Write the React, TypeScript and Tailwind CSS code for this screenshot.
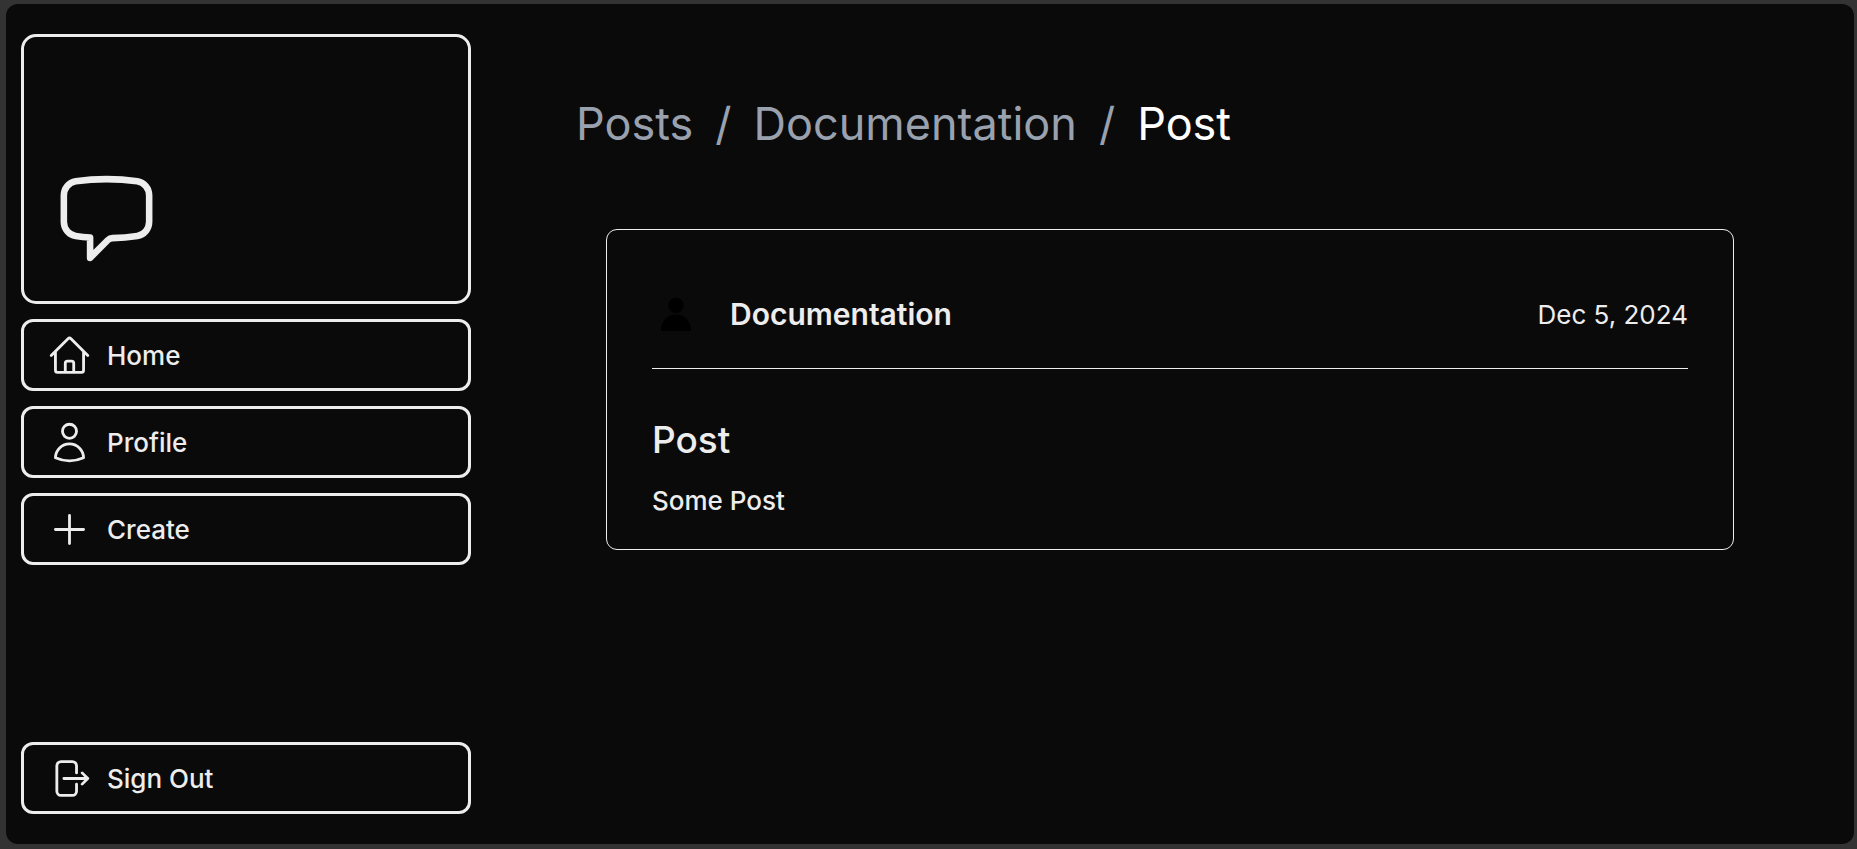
import type { ReactNode } from "react";

const paths = {
  home: "m2.25 12 8.954-8.955c.44-.439 1.152-.439 1.591 0L21.75 12M4.5 9.75v10.125c0 .621.504 1.125 1.125 1.125H9.75v-4.875c0-.621.504-1.125 1.125-1.125h2.25c.621 0 1.125.504 1.125 1.125V21h4.125c.621 0 1.125-.504 1.125-1.125V9.75M8.25 21h8.25",
  user: "M15.75 6a3.75 3.75 0 1 1-7.5 0 3.75 3.75 0 0 1 7.5 0ZM4.501 20.118a7.5 7.5 0 0 1 14.998 0A17.933 17.933 0 0 1 12 21.75c-2.676 0-5.216-.584-7.499-1.632Z",
  plus: "M12 4.5v15m7.5-7.5h-15",
  signOut:
    "M15.75 9V5.25A2.25 2.25 0 0 0 13.5 3h-6a2.25 2.25 0 0 0-2.25 2.25v13.5A2.25 2.25 0 0 0 7.5 21h6a2.25 2.25 0 0 0 2.25-2.25V15m3 0 3-3m0 0-3-3m3 3H9",
  chat: "M2.25 12.76c0 1.6 1.123 2.994 2.707 3.227 1.087.16 2.185.283 3.293.369V21l4.076-4.076a1.526 1.526 0 0 1 1.037-.443 48.282 48.282 0 0 0 5.68-.494c1.584-.233 2.707-1.626 2.707-3.228V6.741c0-1.602-1.123-2.995-2.707-3.228A48.394 48.394 0 0 0 12 3c-2.392 0-4.744.175-7.043.513C3.373 3.746 2.25 5.14 2.25 6.741v6.018Z",
};

function Icon({ name, className }: { name: keyof typeof paths; className: string }) {
  return (
    <svg
      viewBox="0 0 24 24"
      fill="none"
      stroke="currentColor"
      strokeWidth={1.5}
      strokeLinecap="round"
      strokeLinejoin="round"
      aria-hidden="true"
      className={className}
    >
      <path d={paths[name]} />
    </svg>
  );
}

const itemClass =
  "flex h-[72px] w-full items-center gap-[15px] rounded-xl border-3 border-[#ededed] px-[23px] text-[26px] font-medium";

function NavLink({ icon, children }: { icon: keyof typeof paths; children: ReactNode }) {
  return (
    <a href="#" className={itemClass}>
      <Icon name={icon} className="size-[45px] shrink-0" />
      {children}
    </a>
  );
}

function Sidebar() {
  return (
    <aside className="flex w-[450px] shrink-0 flex-col gap-[15px]">
      <a
        href="#"
        aria-label="Posts home"
        className="flex h-[270px] items-end rounded-[15px] border-3 border-[#ededed] p-[30px]"
      >
        <Icon name="chat" className="size-[105px]" />
      </a>
      <nav className="flex flex-col gap-[15px]">
        <NavLink icon="home">Home</NavLink>
        <NavLink icon="user">Profile</NavLink>
        <NavLink icon="plus">Create</NavLink>
      </nav>
      <button type="button" className={`${itemClass} mt-auto`}>
        <Icon name="signOut" className="size-[45px] shrink-0" />
        Sign Out
      </button>
    </aside>
  );
}

function Avatar() {
  return (
    <svg viewBox="0 0 48 48" aria-hidden="true" className="size-12 shrink-0 text-black">
      <circle cx="24" cy="15.5" r="7.7" fill="currentColor" />
      <path d="M9 41v-1.500a15 15 0 0 1 30 0V41Z" fill="currentColor" />
    </svg>
  );
}

function Post() {
  return (
    <article className="mx-[30px] rounded-[11px] border border-[#ededed] px-[45px] pt-[45px] pb-[30px]">
      <header className="flex items-center border-b border-[#ededed] pt-[15px] pb-[30px]">
        <Avatar />
        <h2 className="ml-[30px] text-[30px] leading-[48px] font-semibold">Documentation</h2>
        <time dateTime="2024-12-05" className="ml-auto text-[26px]">
          Dec 5, 2024
        </time>
      </header>
      <h1 className="mt-[45px] text-[37px] leading-[51px] font-medium">Post</h1>
      <p className="mt-[18px] text-[26px] leading-[36px] font-medium">Some Post</p>
    </article>
  );
}

export default function App() {
  return (
    <div className="flex min-h-screen bg-[#333333] pt-1 pr-[3px] pb-[5px] pl-1.5 font-['Inter',sans-serif] text-[#ededed]">
      <div className="flex grow gap-[15px] rounded-xl bg-[#0a0a0a] py-[30px] pl-[15px]">
        <Sidebar />
        <main className="min-w-0 grow px-[90px] pt-[60px]">
          <nav aria-label="Breadcrumb" className="mb-[75px]">
            <ol className="flex gap-[22px] text-[45px] leading-[60px] text-gray-400">
              <li>
                <a href="#">Posts</a>
              </li>
              <li aria-hidden="true">/</li>
              <li>
                <a href="#">Documentation</a>
              </li>
              <li aria-hidden="true">/</li>
              <li aria-current="page" className="text-white">
                Post
              </li>
            </ol>
          </nav>
          <Post />
        </main>
      </div>
    </div>
  );
}
